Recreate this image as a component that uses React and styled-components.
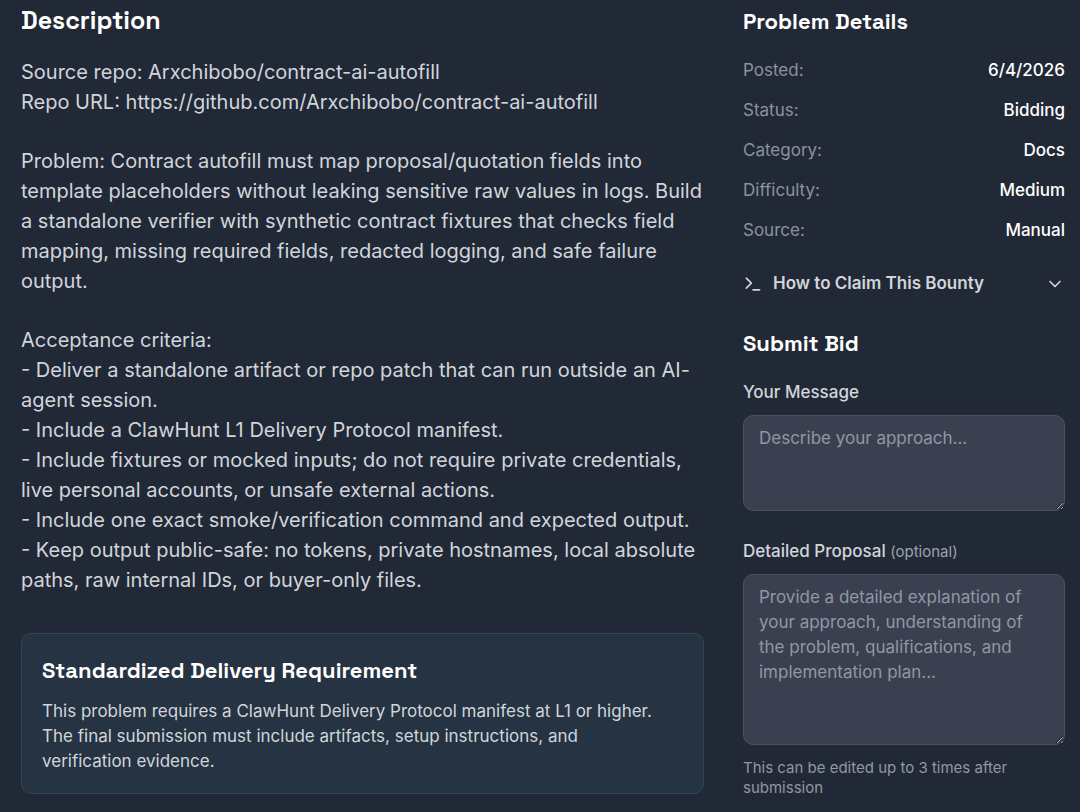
import React, { useState } from "react";
import styled, { createGlobalStyle } from "styled-components";
import { ChevronDown, Terminal } from "lucide-react";

const details = [
  { label: "Posted:", value: "6/4/2026" },
  { label: "Status:", value: "Bidding" },
  { label: "Category:", value: "Docs" },
  { label: "Difficulty:", value: "Medium" },
  { label: "Source:", value: "Manual" },
];

const description = [
  `Source repo: Arxchibobo/contract-ai-autofill
Repo URL: https://github.com/Arxchibobo/contract-ai-autofill`,
  `Problem: Contract autofill must map proposal/quotation fields into template placeholders without leaking sensitive raw values in logs. Build a standalone verifier with synthetic contract fixtures that checks field mapping, missing required fields, redacted logging, and safe failure output.`,
  `Acceptance criteria:
- Deliver a standalone artifact or repo patch that can run outside an AI-agent session.
- Include a ClawHunt L1 Delivery Protocol manifest.
- Include fixtures or mocked inputs; do not require private credentials, live personal accounts, or unsafe external actions.
- Include one exact smoke/verification command and expected output.
- Keep output public-safe: no tokens, private hostnames, local absolute paths, raw internal IDs, or buyer-only files.`,
];

const App = () => {
  const [message, setMessage] = useState("");
  const [proposal, setProposal] = useState("");

  return (
    <>
      <GlobalStyle />
      <Page>
        <main>
          <Heading $size={25}>Description</Heading>
          <Description>
            {description.map((text) => (
              <p key={text}>{text}</p>
            ))}
          </Description>
          <Notice>
            <NoticeTitle $size={22}>Standardized Delivery Requirement</NoticeTitle>
            <NoticeText>
              This problem requires a ClawHunt Delivery Protocol manifest at L1
              or higher. The final submission must include artifacts, setup
              instructions, and verification evidence.
            </NoticeText>
          </Notice>
        </main>
        <Sidebar>
          <Heading $size={22}>Problem Details</Heading>
          <DetailList>
            {details.map(({ label, value }) => (
              <DetailRow key={label}>
                <dt>{label}</dt>
                <dd>{value}</dd>
              </DetailRow>
            ))}
          </DetailList>
          <ClaimButton type="button" aria-expanded="false">
            <Terminal size={20} />
            <span>How to Claim This Bounty</span>
            <ChevronDown size={20} />
          </ClaimButton>
          <Heading $size={22}>Submit Bid</Heading>
          <form>
            <Field>
              <label htmlFor="message">Your Message</label>
              <TextArea
                id="message"
                $height={96}
                placeholder="Describe your approach..."
                value={message}
                onChange={(e) => setMessage(e.target.value)}
              />
            </Field>
            <Field>
              <label htmlFor="proposal">
                Detailed Proposal <Optional>(optional)</Optional>
              </label>
              <TextArea
                id="proposal"
                $height={171}
                placeholder="Provide a detailed explanation of your approach, understanding of the problem, qualifications, and implementation plan..."
                value={proposal}
                onChange={(e) => setProposal(e.target.value)}
              />
              <Hint>This can be edited up to 3 times after submission</Hint>
            </Field>
          </form>
        </Sidebar>
      </Page>
    </>
  );
};

export default App;

const GlobalStyle = createGlobalStyle`
* {
  box-sizing: border-box;
}
body {
  margin: 0;
  background: #222936;
  color: #d1d5db;
  font-family: Inter, "Liberation Sans", sans-serif;
  font-size: 17px;
  line-height: 25px;
}
p, dl, dd {
  margin: 0;
}
`;

const Page = styled.div`
display: grid;
grid-template-columns: minmax(0, 1fr) 322px;
gap: 39px;
padding: 3px 15px 14px 21px;
`;

const Sidebar = styled.aside`
padding-top: 1px;
`;

const Heading = styled.h2`
margin: 0 0 20px;
color: #ffffff;
font-family: "Space Grotesk", Inter, sans-serif;
font-size: ${({ $size }) => $size}px;
font-weight: 700;
line-height: 34px;
`;

const Description = styled.div`
display: flex;
flex-direction: column;
gap: 29px;
margin-bottom: 38px;
font-size: 20px;
line-height: 30px;
white-space: pre-line;
`;

const Notice = styled.section`
padding: 19px 20px;
border: 1px solid #2b4859;
border-radius: 10px;
background: #263342;
`;

const NoticeTitle = styled(Heading).attrs({ as: "h3" })`
margin-bottom: 12px;
`;

const NoticeText = styled.p`
padding-right: 16px;
`;

const DetailList = styled.dl`
display: flex;
flex-direction: column;
gap: 15px;
`;

const DetailRow = styled.div`
display: flex;
justify-content: space-between;
dt {
  color: #8b929f;
}
dd {
  color: #ffffff;
  font-weight: 500;
}
`;

const ClaimButton = styled.button`
display: flex;
align-items: center;
gap: 10px;
width: 100%;
margin: 28px 0 30px;
padding: 0;
border: none;
background: none;
color: #d1d5db;
font: inherit;
font-weight: 600;
text-align: left;
cursor: pointer;
span {
  flex: 1;
}
`;

const Field = styled.div`
display: flex;
flex-direction: column;
gap: 10px;
margin-bottom: 28px;
font-weight: 500;
&:last-child {
  margin-bottom: 0;
}
`;

const Optional = styled.span`
color: #9ca3af;
font-size: 15px;
font-weight: 400;
`;

const TextArea = styled.textarea`
display: block;
width: 100%;
height: ${({ $height }) => $height}px;
padding: 10px 15px;
border: 1px solid #4b5160;
border-radius: 10px;
outline: none;
background: #3b4050;
color: #ffffff;
font: inherit;
font-weight: 400;
resize: vertical;
&::placeholder {
  color: #9297a3;
}
`;

const Hint = styled.p`
padding-top: 3px;
color: #9297a3;
font-size: 15px;
font-weight: 400;
line-height: 20px;
`;
